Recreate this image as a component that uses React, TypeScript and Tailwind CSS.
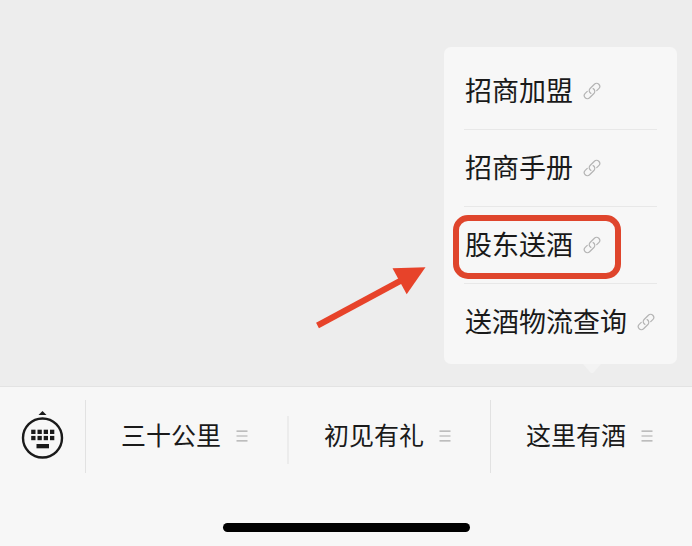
const menuItems = [
  { label: "招商加盟" },
  { label: "招商手册" },
  { label: "股东送酒", highlighted: true },
  { label: "送酒物流查询" },
];

export default function App() {
  return (
    <div className="flex h-[546px] w-[692px] flex-col overflow-hidden bg-[#ededed] font-['Noto_Sans_CJK_SC','Noto_Sans',sans-serif] text-[#1a1a1a]">
      <main className="relative flex h-[386px] shrink-0 justify-end pt-[47px] pr-[15px]">
        <PopupMenu />
        <Arrow />
      </main>
      <footer className="flex flex-1 flex-col items-center border-t border-[#e3e3e3] bg-[#f7f7f7]">
        <TabBar />
        <div className="mt-[50px] h-[9px] w-[247px] rounded-full bg-black" />
      </footer>
    </div>
  );
}

function PopupMenu() {
  return (
    <div className="relative h-[317px] w-[233px] rounded-[7px] bg-[#f7f7f7] px-5 pt-[6px]">
      {menuItems.map(({ label, highlighted }) => (
        <div key={label} className="relative flex h-[77px] items-center border-b border-[#e8e8e8] pl-px last-of-type:border-transparent">
          <span className="pb-[3px] text-[27px] leading-none whitespace-nowrap">{label}</span>
          <LinkIcon />
          {highlighted && (
            <div className="absolute top-[8px] -left-[11px] h-[64px] w-[168px] rounded-[15px] border-[6px] border-[#df452c]" />
          )}
        </div>
      ))}
      <svg className="absolute top-[317px] left-[139px] h-[10px] w-[18px]" viewBox="0 0 18 10">
        <path d="M0 0h18L10.500 8.500Q9 10 7.500 8.500Z" fill="#f3f3f3" />
      </svg>
    </div>
  );
}

function LinkIcon() {
  return (
    <svg className="mb-px ml-[10px] h-[18px] w-[18px] shrink-0" viewBox="-9 -9 18 18" fill="none" stroke="#b4b4b4" strokeWidth="1.2" strokeLinecap="round">
      <g transform="rotate(-45)">
        <path d="M-3.600 -3.100H-6.500a3.100 3.100 0 0 0 0 6.200H-0.400a3.100 3.100 0 0 0 2.900 -4" />
        <path d="M3.600 3.100H6.500a3.100 3.100 0 0 0 0 -6.200H0.400a3.100 3.100 0 0 0 -2.900 4" />
      </g>
    </svg>
  );
}

function Arrow() {
  return (
    <svg className="absolute top-[260px] left-[310px] h-[75px] w-[120px]" viewBox="0 0 120 75">
      <path d="M7.500 65.500L92 20" stroke="#e7432a" strokeWidth="6" />
      <path d="M82.500 8.300L115.500 7.300L96.700 34.300Z" fill="#e7432a" />
    </svg>
  );
}

function TabBar() {
  return (
    <nav className="mt-[13px] flex h-[73px] w-full items-center">
      <div className="flex h-full w-[86px] shrink-0 border-r border-[#e2e2e2] pt-[10px] pl-[21px]">
        <KeyboardIcon />
      </div>
      <Tab label="三十公里" />
      <div className="mt-[6px] h-[48px] w-[2px] bg-[#ececec]" />
      <Tab label="初见有礼" />
      <div className="h-full w-px bg-[#e2e2e2]" />
      <Tab label="这里有酒" />
    </nav>
  );
}

function Tab({ label }: { label: string }) {
  return (
    <div className="flex w-[201px] items-center pl-[35px]">
      <span className="pb-[4px] text-[25px] leading-none whitespace-nowrap">{label}</span>
      <svg className="mb-[2px] ml-[15px] h-[12px] w-[12px]" viewBox="0 0 12 12" stroke="#aaaaaa" strokeWidth="1.2">
        <path d="M0.500 1.200h11M0.500 6h11M0.500 10.800h11" />
      </svg>
    </div>
  );
}

function KeyboardIcon() {
  return (
    <svg className="h-[50px] w-[43px]" viewBox="0 0 43 50" fill="#1a1a1a">
      <path d="M17.500 5L21.500 1L25.500 5Z" />
      <circle cx="21.500" cy="28" r="19.500" fill="none" stroke="#1a1a1a" strokeWidth="2.400" />
      {[19.700, 25.900].map((y) =>
        [10.200, 16.500, 22.700, 29].map((x) => <rect key={`${x}-${y}`} x={x} y={y} width="4.300" height="4.300" />)
      )}
      <rect x="15.500" y="34" width="12.500" height="4.300" />
    </svg>
  );
}
